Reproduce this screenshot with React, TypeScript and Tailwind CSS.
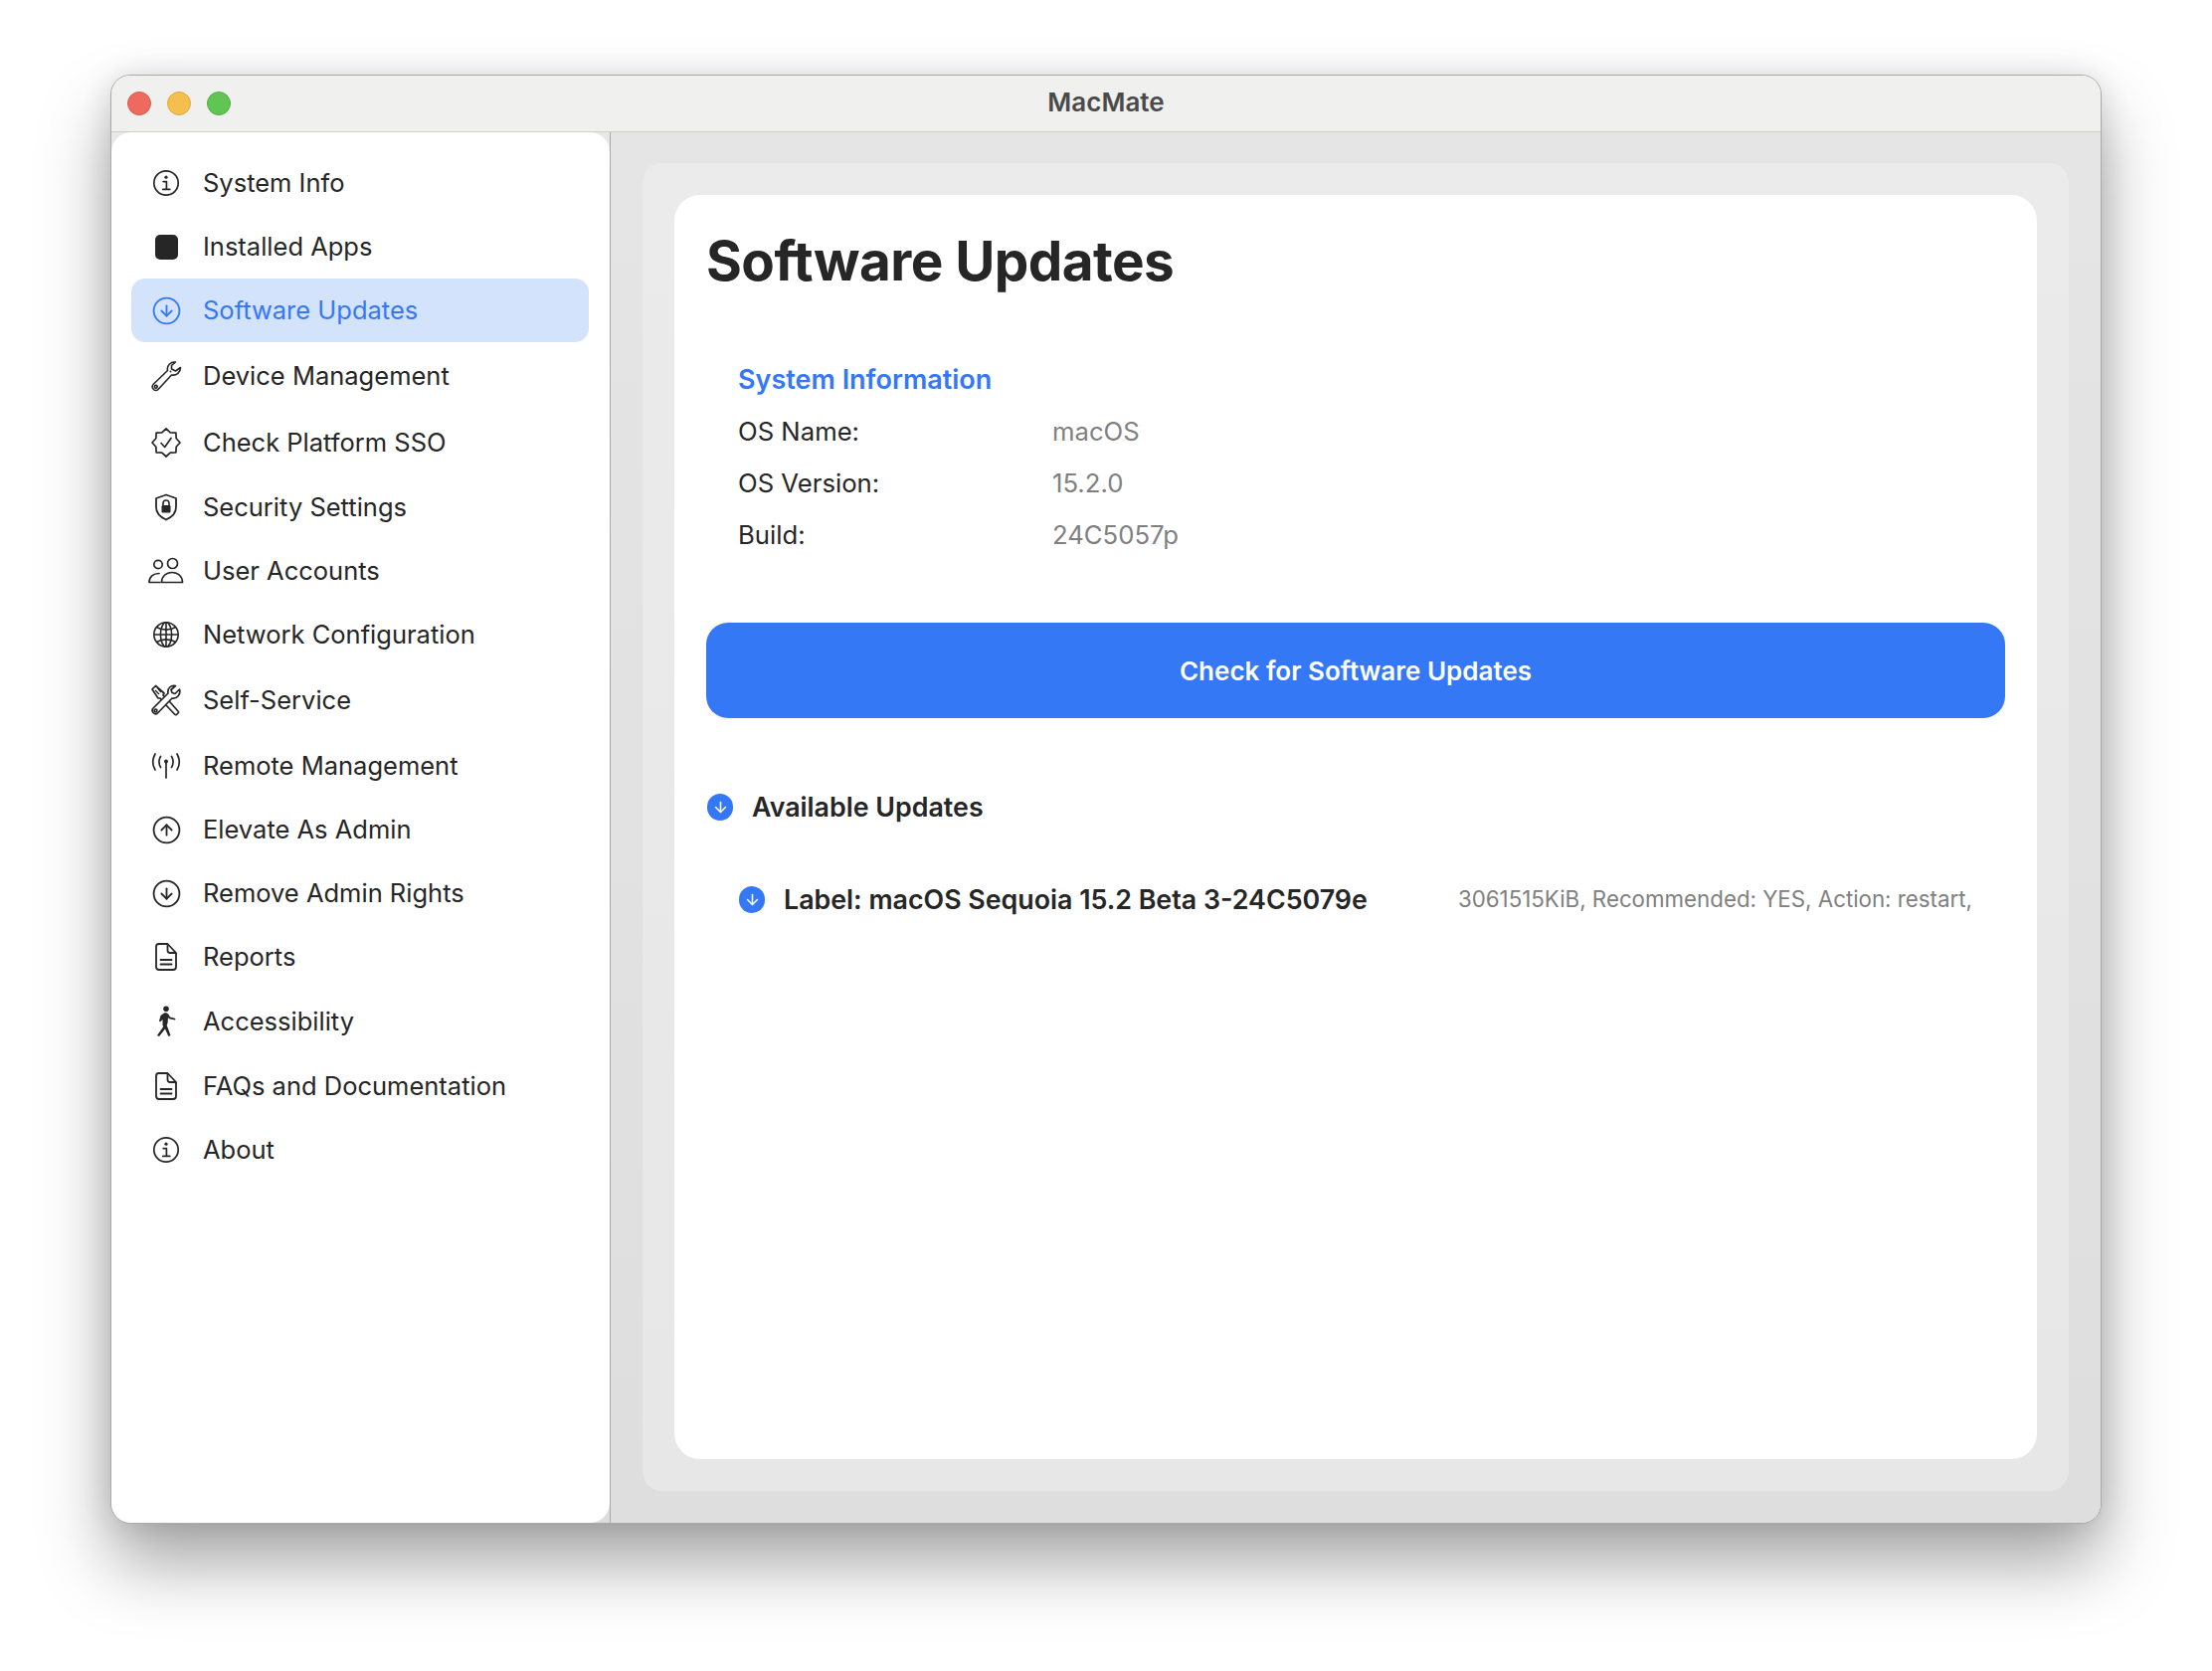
import React from 'react';
import { CircleArrowDown, CircleArrowUp, ArrowDown } from 'lucide-react';

const font = "font-['Inter','Liberation_Sans',sans-serif]";

function Square() {
  return <div className="w-[23px] h-[25px] rounded-[5px] bg-[#262626]" />;
}

function InfoMark() {
  return (
    <svg width="28" height="28" viewBox="0 0 28 28" fill="none" stroke="currentColor" strokeWidth="1.7">
      <circle cx="14" cy="14" r="12.2" />
      <circle cx="14" cy="8.2" r="1.6" fill="currentColor" stroke="none" />
      <path d="M11.2 12.6 H14.4 V20.2 M10.8 20.4 H17.8" strokeLinecap="round" strokeLinejoin="round" />
    </svg>
  );
}

function WrenchIcon() {
  return (
    <svg width="32" height="32" viewBox="0 0 32 32" fill="none" stroke="currentColor" strokeWidth="1.6" strokeLinejoin="round">
      <path d="M25.5 2 C20.5 1.5 16.5 5.5 17.5 10.5 L3.5 24 C1.5 26 2 28 3.5 29.5 C5 31 7 31 8.5 29 L21.5 15 C26.5 16 30.5 12 30.5 7.5 L25.5 11 L21.5 9 L21.5 5.5 Z" />
      <circle cx="5.8" cy="26.8" r="1.4" />
      <circle cx="20.5" cy="11.5" r="0.9" fill="currentColor" stroke="none" />
    </svg>
  );
}

function CheckBadge() {
  const points = Array.from({ length: 16 }, (_, i) => {
    const r = i % 2 === 0 ? 14 : 11;
    const a = (i * Math.PI) / 8 - Math.PI / 2;
    return `${(16 + r * Math.cos(a)).toFixed(2)},${(16 + r * Math.sin(a)).toFixed(2)}`;
  }).join(' ');
  return (
    <svg width="32" height="32" viewBox="0 0 32 32" fill="none" stroke="currentColor" strokeWidth="1.7" strokeLinejoin="round">
      <polygon points={points} />
      <path d="M11 16.5 L14.7 20.5 L21 11.5" strokeLinecap="round" />
    </svg>
  );
}

function ShieldLock() {
  return (
    <svg width="30" height="30" viewBox="0 0 30 30" fill="none" stroke="currentColor" strokeWidth="1.8">
      <path d="M15 2.5 L25 6 V15 C25 21 20.5 25 15 27.5 C9.5 25 5 21 5 15 V6 Z" strokeLinejoin="round" />
      <rect x="10.5" y="13" width="9" height="7.5" rx="1.2" fill="currentColor" stroke="none" />
      <path d="M12 13.5 V11 a3 3 0 0 1 6 0 V13.5" strokeWidth="1.6" />
    </svg>
  );
}

function People() {
  return (
    <svg width="36" height="28" viewBox="0 0 36 28" fill="none" stroke="currentColor" strokeWidth="1.7">
      <circle cx="10" cy="7.5" r="4.2" />
      <circle cx="24.5" cy="6.5" r="5" />
      <path d="M1 25.5 H12 M1 25.5 C1 20 5 16.5 11 16.5" strokeLinecap="round" />
      <path d="M13.5 25.5 H34.5 C34.5 19.5 30 15.5 24 15.5 C18 15.5 13.5 19.5 13.5 25.5 Z" strokeLinejoin="round" />
    </svg>
  );
}

function Network() {
  return (
    <svg width="28" height="28" viewBox="0 0 28 28" fill="none" stroke="currentColor" strokeWidth="1.6">
      <circle cx="14" cy="14" r="12.2" />
      <ellipse cx="14" cy="14" rx="5.6" ry="12.2" />
      <path d="M14 2 V26 M2 14 H26" />
      <path d="M4.5 6.5 C10 10 18 10 23.5 6.5 M4.5 21.5 C10 18 18 18 23.5 21.5" />
    </svg>
  );
}

function Tools() {
  return (
    <svg width="32" height="32" viewBox="0 0 32 32" fill="none" stroke="currentColor" strokeWidth="1.7" strokeLinejoin="round">
      <path d="M2 5 L5.5 1.5 L14 9 L13 11 L20 18 L28 27 Q29 28 28 29 L26.5 30.5 Q25.5 31 24.5 30 L16 21 L10 14 L8 14 Z" />
      <path d="M5 6 L9 10 M7.5 4 L11 8" strokeWidth="1.3" />
      <path d="M29.5 5 L25 9.5 L22 8.5 L21 5.5 L25.5 1.5 C21 0.5 17 4 18 9 L3 24 C1 26 2 27 3 28.5 C4.5 30 6 30.5 7.5 29 L22 14 C27 15 31 10 29.5 5 Z" fill="white" />
      <circle cx="5.5" cy="26.5" r="1.4" />
    </svg>
  );
}

function Antenna() {
  return (
    <svg width="30" height="26" viewBox="0 0 30 26" fill="none" stroke="currentColor" strokeWidth="1.7" strokeLinecap="round">
      <circle cx="15" cy="8.5" r="2" fill="currentColor" stroke="none" />
      <path d="M15 9 V25" />
      <path d="M9.5 3.5 C7.5 7 7.5 11 9.5 14.5 M20.5 3.5 C22.5 7 22.5 11 20.5 14.5" />
      <path d="M4 1 C1 6.5 1 12 4 17 M26 1 C29 6.5 29 12 26 17" />
    </svg>
  );
}

function Doc() {
  return (
    <svg width="24" height="30" viewBox="0 0 24 30" fill="none" stroke="currentColor" strokeWidth="1.8" strokeLinejoin="round">
      <path d="M4.5 2 H13.5 L22 11 V25 Q22 28 19 28 H5 Q2 28 2 25 V4.5 Q2 2 4.5 2 Z" />
      <path d="M13.5 2 V8.5 Q13.5 11 16 11 H22" />
      <path d="M6.5 18 H17.5 M6.5 22.5 H17.5" strokeLinecap="round" />
    </svg>
  );
}

function Walk() {
  return (
    <svg width="24" height="32" viewBox="0 0 24 32" fill="currentColor">
      <circle cx="12" cy="3.2" r="2.8" />
      <path d="M10 7.5 C12 7 13.5 7.5 14.5 9 L16 11.5 L21.5 13 L21 14.5 L15 13.2 L14 12 L13.6 17.5 L12.5 20 L8.5 20 L8.5 14 L6 16.5 L5 15.5 L6.5 10 Z" />
      <path d="M9 19.5 L12.6 19.5 L16.5 30 L14.4 31 L11 23.5 L5 31 L3 30 L9 21.5 Z" />
    </svg>
  );
}

const iconProps = { size: 31, strokeWidth: 1.4 };

const navItems = [
  { label: 'System Info', icon: <InfoMark />, h: 'h-[64px]' },
  { label: 'Installed Apps', icon: <Square />, h: 'h-[64px]' },
  { label: 'Software Updates', icon: <CircleArrowDown {...iconProps} />, h: 'h-[64px]', active: true },
  { label: 'Device Management', icon: <WrenchIcon />, h: 'h-[68px]' },
  { label: 'Check Platform SSO', icon: <CheckBadge />, h: 'h-[66px]' },
  { label: 'Security Settings', icon: <ShieldLock />, h: 'h-[64px]' },
  { label: 'User Accounts', icon: <People />, h: 'h-[64px]' },
  { label: 'Network Configuration', icon: <Network />, h: 'h-[64px]' },
  { label: 'Self-Service', icon: <Tools />, h: 'h-[68px]' },
  { label: 'Remote Management', icon: <Antenna />, h: 'h-[64px]' },
  { label: 'Elevate As Admin', icon: <CircleArrowUp {...iconProps} />, h: 'h-[64px]' },
  { label: 'Remove Admin Rights', icon: <CircleArrowDown {...iconProps} />, h: 'h-[64px]' },
  { label: 'Reports', icon: <Doc />, h: 'h-[64px]' },
  { label: 'Accessibility', icon: <Walk />, h: 'h-[66px]' },
  { label: 'FAQs and Documentation', icon: <Doc />, h: 'h-[64px]' },
  { label: 'About', icon: <InfoMark />, h: 'h-[64px]' },
];

const sysInfo = [
  ['OS Name:', 'macOS'],
  ['OS Version:', '15.2.0'],
  ['Build:', '24C5057p'],
];

function DownDot() {
  return (
    <div className="w-[26px] h-[27px] rounded-full bg-[#3478f6] flex items-center justify-center text-white shrink-0">
      <ArrowDown size={17} strokeWidth={2.2} />
    </div>
  );
}

export default function App() {
  return (
    <div className={`min-h-screen bg-white pt-[75px] pl-[111px] ${font}`}>
      <div className="w-[2002px] h-[1457px] rounded-[20px] border border-[#a9a9a9] bg-[#e8e8e8] overflow-hidden flex flex-col shadow-[0_40px_70px_rgba(0,0,0,0.35),0_0_30px_rgba(0,0,0,0.12)]">
        {/* Title bar */}
        <div className="relative h-[57px] shrink-0 bg-[#f0f0ee] border-b border-[#cfcfcf] flex items-center justify-center pb-[4px]">
          <div className="absolute left-[16px] top-[16px] flex gap-[16px]">
            <div className="w-[24px] h-[24px] rounded-full bg-[#ec6a5e] border border-[#d85a50]" />
            <div className="w-[24px] h-[24px] rounded-full bg-[#f5bf4f] border border-[#dfa93f]" />
            <div className="w-[24px] h-[24px] rounded-full bg-[#61c554] border border-[#52ad46]" />
          </div>
          <span className="text-[26px] font-semibold text-[#4a4a4a]">MacMate</span>
        </div>

        <div className="flex-1 flex min-h-0">
          {/* Sidebar */}
          <div className="w-[502px] shrink-0 border-r border-[#a9a9a9] bg-linear-to-b from-[#e8e8e8] to-[#dcdcdc]">
            <div className="h-full rounded-[20px] bg-white pt-[19px] pl-[20px] pr-[21px]">
              {navItems.map((item) => (
                <div
                  key={item.label}
                  className={`${item.h} flex items-center rounded-[14px] pl-[17px] text-[25.5px] ${
                    item.active ? 'bg-[#d4e3fc] text-[#3478f6]' : 'text-[#262626]'
                  }`}
                >
                  <div className="w-[36px] flex items-center justify-center shrink-0">{item.icon}</div>
                  <span className="ml-[19px]">{item.label}</span>
                </div>
              ))}
            </div>
          </div>

          {/* Main */}
          <div className="flex-1 min-w-0 pt-[31px] px-[32px] pb-[32px] bg-linear-to-b from-[#e5e5e5] to-[#dedede]">
            <div className="h-full rounded-[20px] bg-linear-to-b from-[#ebebeb] to-[#e7e7e7] p-[32px]">
              <div className="h-full rounded-[26px] bg-white pt-[32px] px-[32px]">
                <h1 className="h-[68px] flex items-center text-[54.8px] font-bold text-[#262626] tracking-[-0.01em]">Software Updates</h1>

                <div className="mt-[60px] pl-[32px]">
                  <div className="h-[52px] flex items-center text-[27px] font-semibold text-[#3478f6]">System Information</div>
                  {sysInfo.map(([k, v]) => (
                    <div key={k} className="h-[52px] flex items-center text-[25.7px]">
                      <span className="w-[316px] text-[#262626]">{k}</span>
                      <span className="text-[#808080]">{v}</span>
                    </div>
                  ))}
                </div>

                <button className="mt-[62px] w-full h-[96px] rounded-[22px] bg-[#3478f6] text-white text-[26px] font-semibold flex items-center justify-center">
                  Check for Software Updates
                </button>

                <div className="mt-[73px] h-[32px] pl-[1px] flex items-center gap-[19px]">
                  <DownDot />
                  <span className="text-[26.8px] font-semibold text-[#262626]">Available Updates</span>
                </div>

                <div className="mt-[61px] h-[32px] pl-[33px] pr-[33px] flex items-center justify-between">
                  <div className="flex items-center gap-[19px]">
                    <DownDot />
                    <span className="text-[26.8px] font-semibold text-[#262626]">Label: macOS Sequoia 15.2 Beta 3-24C5079e</span>
                  </div>
                  <span className="text-[22.3px] text-[#808080]">3061515KiB, Recommended: YES, Action: restart,</span>
                </div>
              </div>
            </div>
          </div>
        </div>
      </div>
    </div>
  );
}
